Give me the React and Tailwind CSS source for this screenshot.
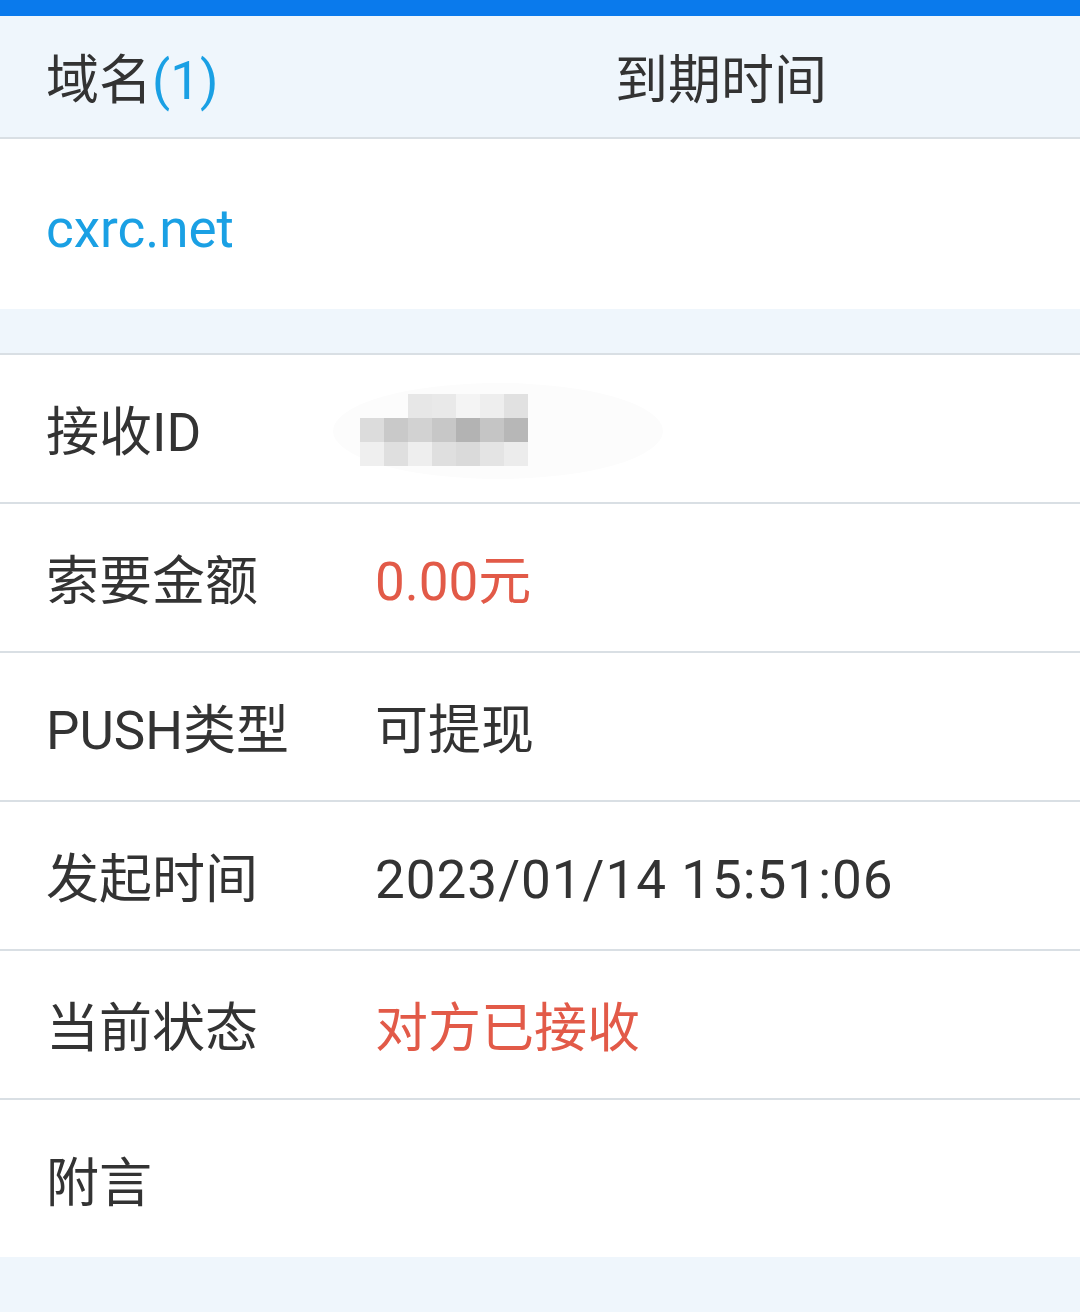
import React from 'react';

// pixelated blur over the receiver id
const mosaic = [
  [null, null, '#e7e7e7', '#e9e9e9', '#f4f4f4', '#eeeeee', '#e1e1e1'],
  ['#dcdcdc', '#c9c9c9', '#d2d2d2', '#c7c7c7', '#b3b3b3', '#c5c5c5', '#b7b7b7'],
  ['#efefef', '#dfdfdf', '#eeeeee', '#dfdfdf', '#dadada', '#e4e4e4', '#ececec'],
];

const MaskedId = () => (
  <svg width="340" height="110" viewBox="0 0 340 110" className="block">
    <ellipse cx="170" cy="55" rx="165" ry="48" fill="#fcfcfc" />
    {mosaic.map((row, r) =>
      row.map((c, i) => (c ? <rect key={`${r}-${i}`} x={32 + i * 24} y={18 + r * 24} width="24" height="24" fill={c} /> : null))
    )}
  </svg>
);

const rows = [
  { label: '接收ID', value: <MaskedId />, masked: true },
  { label: '索要金额', value: '0.00元', color: 'text-[#e25a48]' },
  { label: 'PUSH类型', value: '可提现' },
  { label: '发起时间', value: '2023/01/14 15:51:06', color: 'tracking-[1px]' },
  { label: '当前状态', value: '对方已接收', color: 'text-[#e25a48]' },
];

const App = () => {
  return (
    <div
      className="w-[1080px] h-[1312px] bg-[#eff6fc] text-[#333333] overflow-hidden"
      style={{ fontFamily: 'Roboto, "Noto Sans CJK SC", sans-serif' }}
    >
      <div className="h-4 bg-[#0a7aec]" />

      {/* table header */}
      <div className="flex items-center h-[123px] pt-[10px] border-b-2 border-[#d9dfe4] text-[53px]">
        <div className="w-[615px] pl-[46px]">
          域名<span className="text-[#1aa0e4]">(1)</span>
        </div>
        <div>到期时间</div>
      </div>

      <div className="flex items-center h-[170px] pt-3 bg-white pl-[46px] text-[53px] text-[#1aa0e4]">
        cxrc.net
      </div>

      <div className="h-[46px] border-b-2 border-[#d9dfe4]" />

      {/* detail rows */}
      <div className="bg-white">
        {rows.map((row) => (
          <div key={row.label} className="flex items-center h-[149px] pt-[10px] border-b-2 border-[#d9dfe4] text-[53px]">
            <div className="w-[375px] pl-[46px] shrink-0">{row.label}</div>
            {row.masked ? (
              <div className="-ml-[47px] -mt-[6px]">{row.value}</div>
            ) : (
              <div className={row.color}>{row.value}</div>
            )}
          </div>
        ))}
        <div className="flex items-center h-[157px] pt-3 pl-[46px] text-[53px]">附言</div>
      </div>
    </div>
  );
};

export default App;
